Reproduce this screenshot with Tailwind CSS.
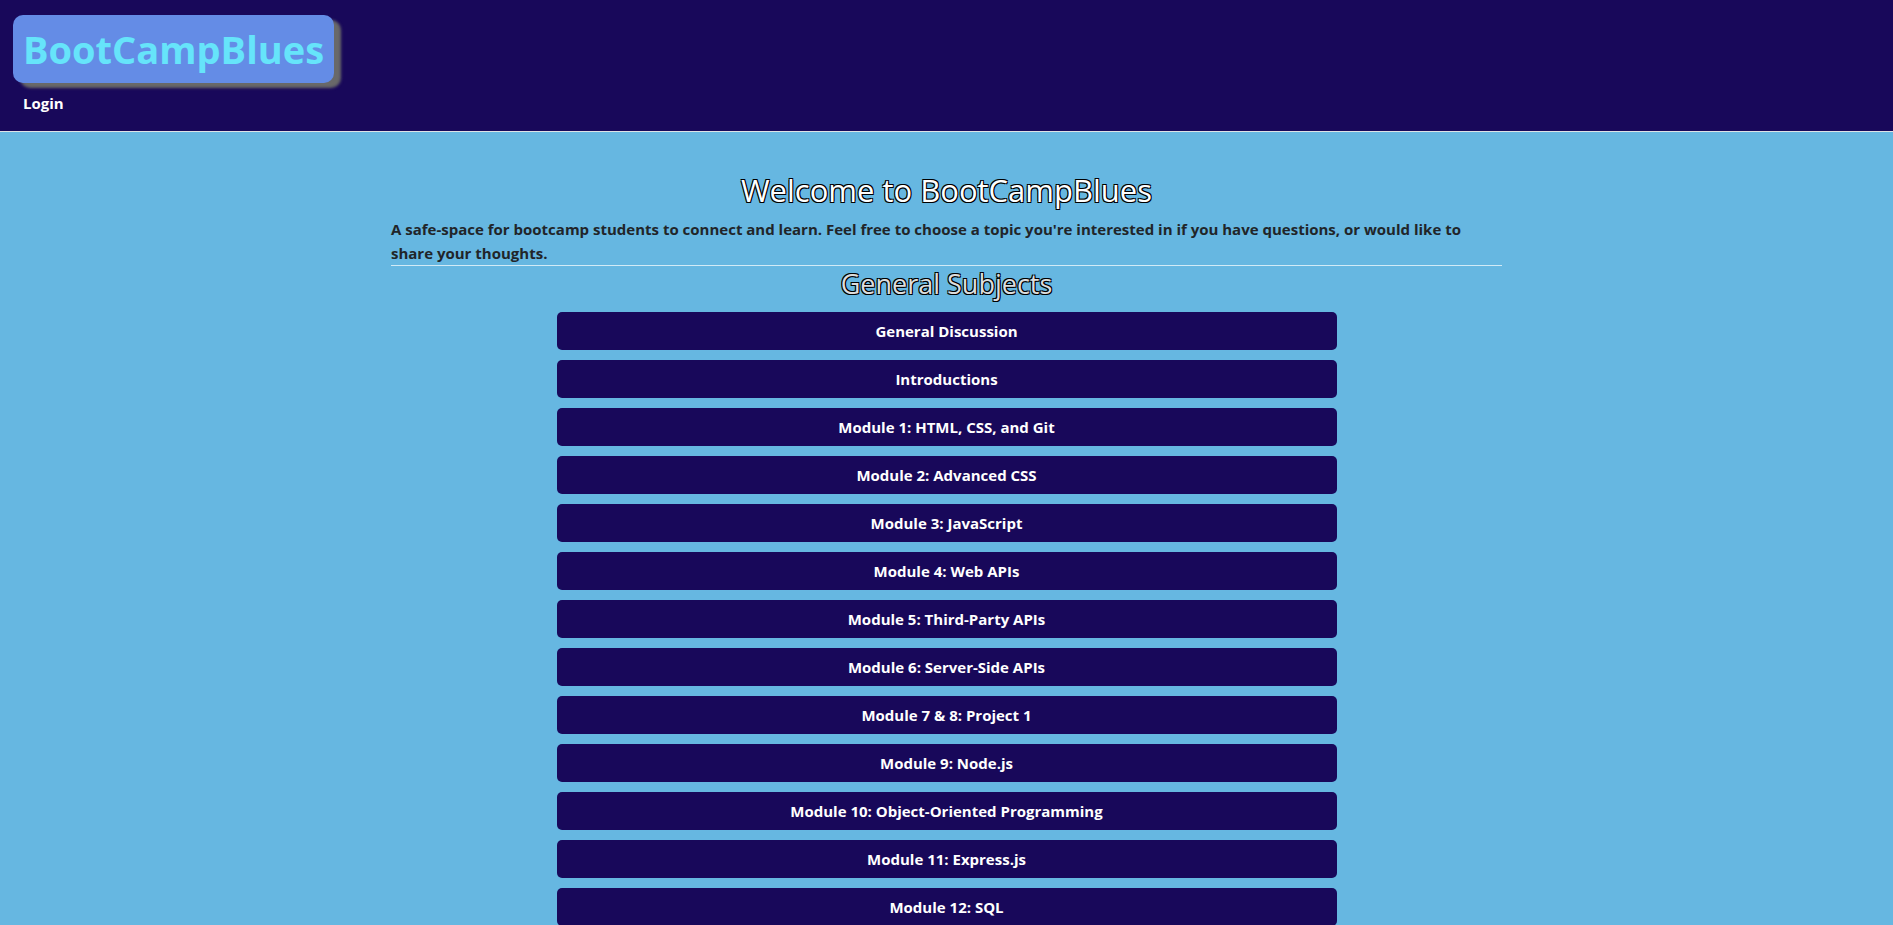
<!DOCTYPE html>
<html lang="en">
<head>
<meta charset="UTF-8">
<meta name="viewport" content="width=device-width, initial-scale=1">
<title>BootCampBlues</title>
<script src="https://cdn.jsdelivr.net/npm/@tailwindcss/browser@4"></script>
</head>
<body class="min-h-screen bg-[#66b7e1] font-['Segoe_UI','Open_Sans',sans-serif] text-[15px] text-[#212529]">
<header class="flex flex-col items-start gap-2 border-b border-[#dee2e6] bg-[#18085a] px-[13px] pt-[15px] pb-4">
  <h1 class="rounded-[10px] bg-[#648ce6] px-[10px] py-2 text-[38px] leading-[52px] font-bold text-[#66e4fa] shadow-[7px_5px_3px_#696969]"><a href="#">BootCampBlues</a></h1>
  <nav><a href="#" class="block px-[10px] leading-6 font-bold text-white">Login</a></nav>
</header>
<main class="mx-auto flex max-w-[1111px] flex-col pt-[39px]">
  <h2 class="text-center text-[31px] leading-[38px] font-normal text-white [text-shadow:-1px_-1px_0_#000,1px_-1px_0_#000,-1px_1px_0_#000,1px_1px_0_#000]">Welcome to BootCampBlues</h2>
  <p class="mt-2 border-b border-white/70 leading-6 font-bold">A safe-space for bootcamp students to connect and learn. Feel free to choose a topic you're interested in if you have questions, or would like to share your thoughts.</p>
  <h3 class="text-center text-[27px] leading-9 font-normal text-[#dddddd] [text-shadow:-1px_-1px_0_#000,1px_-1px_0_#000,-1px_1px_0_#000,1px_1px_0_#000]">General Subjects</h3>
  <div class="mx-auto mt-[10px] grid w-full max-w-[780px] gap-[10px] font-bold text-white">
    <button class="rounded-[5px] bg-[#18085a] py-[7px] leading-6">General Discussion</button>
    <button class="rounded-[5px] bg-[#18085a] py-[7px] leading-6">Introductions</button>
    <button class="rounded-[5px] bg-[#18085a] py-[7px] leading-6">Module 1: HTML, CSS, and Git</button>
    <button class="rounded-[5px] bg-[#18085a] py-[7px] leading-6">Module 2: Advanced CSS</button>
    <button class="rounded-[5px] bg-[#18085a] py-[7px] leading-6">Module 3: JavaScript</button>
    <button class="rounded-[5px] bg-[#18085a] py-[7px] leading-6">Module 4: Web APIs</button>
    <button class="rounded-[5px] bg-[#18085a] py-[7px] leading-6">Module 5: Third-Party APIs</button>
    <button class="rounded-[5px] bg-[#18085a] py-[7px] leading-6">Module 6: Server-Side APIs</button>
    <button class="rounded-[5px] bg-[#18085a] py-[7px] leading-6">Module 7 &amp; 8: Project 1</button>
    <button class="rounded-[5px] bg-[#18085a] py-[7px] leading-6">Module 9: Node.js</button>
    <button class="rounded-[5px] bg-[#18085a] py-[7px] leading-6">Module 10: Object-Oriented Programming</button>
    <button class="rounded-[5px] bg-[#18085a] py-[7px] leading-6">Module 11: Express.js</button>
    <button class="rounded-[5px] bg-[#18085a] py-[7px] leading-6">Module 12: SQL</button>
  </div>
</main>
</body>
</html>
